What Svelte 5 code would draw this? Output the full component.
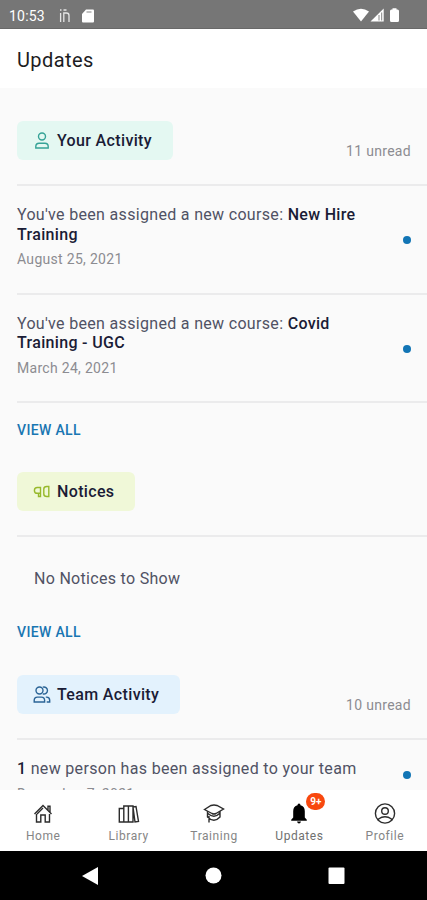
<script lang="ts">
	type Part = { text: string; bold?: boolean };
	type Item = { parts: Part[]; date: string };
	type Section = {
		id: string;
		title: string;
		unread?: number;
		items: Item[];
		empty?: string;
		link?: boolean;
	};

	const assigned = "You've been assigned a new course: ";

	const sections: Section[] = [
		{
			id: 'your',
			title: 'Your Activity',
			unread: 11,
			link: true,
			items: [
				{
					parts: [{ text: assigned }, { text: 'New Hire Training', bold: true }],
					date: 'August 25, 2021'
				},
				{
					parts: [{ text: assigned }, { text: 'Covid Training - UGC', bold: true }],
					date: 'March 24, 2021'
				}
			]
		},
		{ id: 'notices', title: 'Notices', items: [], empty: 'No Notices to Show', link: true },
		{
			id: 'team',
			title: 'Team Activity',
			unread: 10,
			items: [
				{
					parts: [{ text: '1', bold: true }, { text: ' new person has been assigned to your team' }],
					date: 'December 7, 2021'
				}
			]
		}
	];

	const tabs = ['Home', 'Library', 'Training', 'Updates', 'Profile'];
	let current = $state('Updates');
</script>

<div class="screen">
	<div class="status-bar">
		<span class="clock">10:53</span>
		<svg class="status-in" width="12" height="16" viewBox="0 0 12 16">
			<path d="M1.600 5v9M10 14V7.500q0-2.500-2.500-2.500H4.800v9M1 2h1.500M4.500 2h3" />
		</svg>
		<svg class="status-sd" width="12" height="14" viewBox="0 0 12 14">
			<path d="M4 .5h7q1 0 1 1v11q0 1-1 1H1q-1 0-1-1V5z" />
			<path class="pins" d="M4.500 3h5" />
		</svg>
		<svg class="status-right" width="48" height="15" viewBox="0 0 48 15">
			<path d="M0 3.500Q8-2 16 3.500L8 13.500z" />
			<path d="M30.700.5V13.500H17.500z" />
			<path class="cut" d="M26 7v5.500M28.700 4.500v8" />
			<path d="M39.500 1.500V.3h4v1.200h1q1.500 0 1.500 1.500v9.500q0 1.500-1.500 1.500h-6q-1.500 0-1.500-1.500V3q0-1.500 1.500-1.500z" />
		</svg>
	</div>

	<header>
		<h1>Updates</h1>
	</header>

	<main>
		{#each sections as section}
			<section>
				<div class="section-head">
					<h2 class="chip {section.id}">
						{#if section.id === 'your'}
							<svg width="18" height="18" viewBox="0 0 18 18">
								<circle cx="9" cy="4.500" r="3.500" />
								<path d="M2.800 16v-1.500q0-3.300 3.300-3.300h5.800q3.300 0 3.300 3.300V16z" />
							</svg>
						{:else if section.id === 'notices'}
							<svg width="18" height="18" viewBox="0 0 18 18">
								<path d="M7.500 4.500H4.300a2.900 2.900 0 0 0 0 5.800h3.200zM5.500 10.500v3h2v-3" />
								<path d="M15.800 3.500v10h-2q-3 0-3-2.500V6q0-2.500 3-2.500z" />
							</svg>
						{:else}
							<svg width="18" height="18" viewBox="0 0 18 18">
								<circle cx="6.500" cy="4.500" r="3.500" />
								<path d="M1.200 16v-1.700q0-3.200 3.200-3.200h4q3.200 0 3.200 3.200V16z" />
								<path d="M9.800 1.200a3.500 3.500 0 1 1 0 6.600M12.800 11.100h.9q3 0 3 3.200V16h-3" />
							</svg>
						{/if}
						{section.title}
					</h2>
					{#if section.unread}
						<span class="unread">{section.unread} unread</span>
					{/if}
				</div>

				{#each section.items as item}
					<article>
						<div class="row">
							<p class="message">
								{#each item.parts as part}{#if part.bold}<b>{part.text}</b>{:else}{part.text}{/if}{/each}
							</p>
							<i class="dot"></i>
						</div>
						<p class="date">{item.date}</p>
					</article>
				{:else}
					<p class="empty">{section.empty}</p>
				{/each}

				{#if section.link}
					<a class="view-all" class:after-empty={section.empty} href="#{section.id}">VIEW ALL</a>
				{/if}
			</section>
		{/each}
	</main>

	<nav class="tabs">
		{#each tabs as tab}
			<button class:active={tab === current} onclick={() => (current = tab)}>
				<span class="tab-icon">
					<svg width="24" height="24" viewBox="0 0 24 24">
						{#if tab === 'Home'}
							<path d="M3.500 12L12 3.500l8.500 8.500M17 8V4.300h2V10M5.500 12v8h4.300v-7h4.400v7h4.300v-8M12 6l-6 6" />
						{:else if tab === 'Library'}
							<path d="M2.300 6.500h4.500V20H2.300zM6.800 4h4.600v16H6.800zM11.400 4h4.600v16h-4.600zM16 5l3-.5L21.500 19.500l-3.500.5z" />
						{:else if tab === 'Training'}
							<path d="M2.500 7.500L9 3.500q3-1 6 0l6.500 3.500-7.500 4.500q-2 1-4 0zM5.500 9.500V15q6.500 6.500 12.500 0V9.500M6 11.500q6 5.500 11.500 0M7 14v6.500" />
						{:else if tab === 'Updates'}
							<path class="solid" d="M12 1.500q1.500 0 1.500 1.700 4.300 1 4.300 6v6.300l2 2.300v.9H4.200v-.9l2-2.300V9.200q0-5 4.300-6 0-1.700 1.500-1.700zM10 19.500h4q-.5 2-2 2t-2-2z" />
						{:else}
							<circle cx="12" cy="11.500" r="9.600" />
							<circle cx="12" cy="9" r="3.300" />
							<path d="M5.500 18.500V17q6.500-4.500 13 0v1.500" />
						{/if}
					</svg>
					{#if tab === 'Updates'}<em>9+</em>{/if}
				</span>
				{tab}
			</button>
		{/each}
	</nav>

	<div class="system-nav">
		<svg width="17" height="18" viewBox="0 0 17 18"><path d="M0 9L16 0v18z" /></svg>
		<svg width="17" height="18" viewBox="0 0 17 18"><circle cx="8.500" cy="8.500" r="8" /></svg>
		<svg width="17" height="18" viewBox="0 0 17 18"><rect x=".5" y=".5" width="16" height="16.500" rx="1" /></svg>
	</div>
</div>

<style>
	:global(body) {
		margin: 0;
	}

	.screen {
		display: flex;
		flex-direction: column;
		width: 427px;
		height: 900px;
		overflow: hidden;
		background: #fafafa;
		color: #505264;
		font-family: Roboto, 'Liberation Sans', sans-serif;
	}

	h1,
	h2,
	p {
		margin: 0;
	}

	.status-bar {
		display: flex;
		flex: none;
		align-items: center;
		box-sizing: border-box;
		height: 29px;
		padding: 3px 26px 0 9px;
		border-bottom: 1px solid #686868;
		background: #767676;
		color: #fff;
	}
	.status-bar svg {
		fill: #fff;
	}
	.clock {
		width: 50px;
		font-size: 14px;
		letter-spacing: 0.2px;
	}
	.status-bar .status-in {
		fill: none;
		stroke: #e4e4e4;
		stroke-width: 1.3;
	}
	.status-sd {
		margin-left: 11px;
	}
	.pins,
	.cut {
		stroke: #767676;
		stroke-width: 0.9;
	}
	.status-right {
		margin-left: auto;
	}

	header {
		display: flex;
		flex: none;
		align-items: center;
		height: 59px;
		padding: 2px 17px 0;
		box-sizing: border-box;
		background: #fff;
	}
	h1 {
		color: #1d1d1f;
		font-size: 20px;
		font-weight: 400;
		letter-spacing: 0.4px;
	}

	main {
		flex: 1;
		min-height: 0;
		overflow: hidden;
		padding-left: 17px;
	}
	.section-head {
		display: flex;
		align-items: flex-end;
		justify-content: space-between;
		box-sizing: border-box;
		height: 98px;
		padding: 0 16px 24px 0;
		border-bottom: 2px solid #ebebec;
	}
	section:nth-child(2) .section-head {
		height: 97px;
	}
	.chip {
		display: flex;
		align-items: center;
		gap: 6px;
		height: 39px;
		padding: 0 21px 0 16px;
		border-radius: 6px;
		color: #1a1c36;
		font-size: 16px;
		font-weight: 500;
		letter-spacing: 0.35px;
	}
	.chip svg {
		fill: none;
		stroke-width: 1.4;
	}
	.your {
		background: #e4f8f2;
	}
	.your svg {
		stroke: #36a397;
	}
	.notices {
		background: #f0f8d8;
	}
	.notices svg {
		stroke: #97b92b;
	}
	.team {
		background: #e3f2fd;
	}
	.team svg {
		stroke: #2b6496;
	}
	.unread {
		color: #8c8c91;
		font-size: 14px;
		line-height: 18px;
		letter-spacing: 0.3px;
	}

	article {
		padding: 19px 16px 24.5px 0;
		border-bottom: 2px solid #ebebec;
	}
	.row {
		display: flex;
		align-items: flex-end;
		justify-content: space-between;
	}
	.message {
		width: 350px;
		font-size: 16px;
		line-height: 19.5px;
		letter-spacing: 0.32px;
	}
	b {
		color: #1a1c36;
		font-weight: 500;
	}
	.date {
		margin-top: 6px;
		color: #8c8c91;
		font-size: 14px;
		line-height: 18px;
		letter-spacing: 0.3px;
	}
	.dot {
		width: 8px;
		height: 8px;
		border-radius: 50%;
		background: #1275b5;
	}
	.empty {
		padding: 32px 17px 0;
		font-size: 16px;
		line-height: 20px;
		letter-spacing: 0.3px;
	}
	.view-all {
		display: block;
		margin: 18px 0 1px;
		color: #1976b2;
		font-size: 14px;
		font-weight: 500;
		line-height: 18px;
		letter-spacing: 0.35px;
		text-decoration: none;
	}
	.after-empty {
		margin-top: 34px;
	}

	.tabs {
		display: flex;
		flex: none;
		height: 61px;
		background: #fff;
	}
	button {
		display: flex;
		flex: 1;
		flex-direction: column;
		align-items: center;
		padding: 12px 0 0 1px;
		border: 0;
		background: none;
		color: #858585;
		font-family: inherit;
		font-size: 12px;
		line-height: 15px;
		letter-spacing: 0.55px;
	}
	.active {
		color: #707070;
	}
	.tab-icon {
		position: relative;
		height: 27px;
	}
	.tab-icon svg {
		fill: none;
		stroke: #2c2c2c;
		stroke-width: 1.4;
	}
	.tab-icon .solid {
		fill: #000;
		stroke: none;
	}
	em {
		position: absolute;
		top: -9px;
		left: 19px;
		width: 19px;
		border-radius: 9px;
		background: #f8480f;
		color: #fff;
		font-size: 10px;
		font-style: normal;
		font-weight: 700;
		line-height: 17px;
		letter-spacing: 0;
	}

	.system-nav {
		display: flex;
		flex: none;
		align-items: center;
		justify-content: center;
		gap: 106px;
		height: 49px;
		background: #000;
	}
	.system-nav svg {
		fill: #fff;
	}
</style>
